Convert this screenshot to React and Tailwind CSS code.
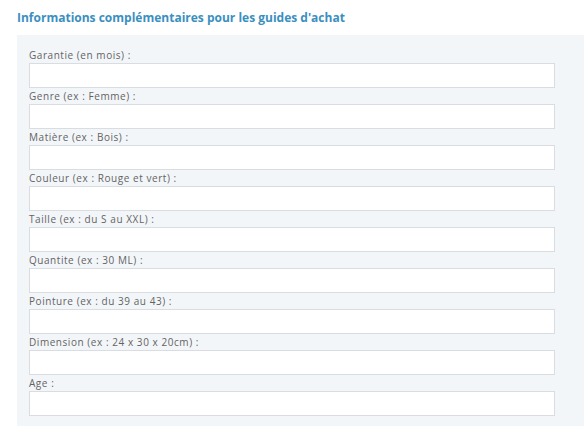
export default function App() {
  const fields = [
    "Garantie (en mois) :",
    "Genre (ex : Femme) :",
    "Matière (ex : Bois) :",
    "Couleur (ex : Rouge et vert) :",
    "Taille (ex : du S au XXL) :",
    "Quantite (ex : 30 ML) :",
    "Pointure (ex : du 39 au 43) :",
    "Dimension (ex : 24 x 30 x 20cm) :",
    "Age :",
  ]

  return (
    <div className="h-[438px] w-[584px] bg-white" style={{ fontFamily: '"Open Sans", sans-serif' }}>
      {/* HEADING */}
      <div className="flex h-[35px] items-center pl-[17px]">
        <h3 className="text-[12px] font-bold leading-none text-[#3b8fbf]">
          Informations complémentaires pour les guides d'achat
        </h3>
      </div>

      {/* PANEL */}
      <div className="ml-[17px] bg-[#f3f6f9] pl-3 pr-[29px] pt-3 pb-[10px]">
        {fields.map((label) => (
          <div key={label} className="flex flex-col">
            <label className="h-[16px] text-[10px] leading-[16px] tracking-[0.55px] text-[#636363]">{label}</label>
            <input
              type="text"
              className="h-[25px] w-full border border-[#d9dde2] bg-white outline-none"
            />
          </div>
        ))}
      </div>
    </div>
  )
}
